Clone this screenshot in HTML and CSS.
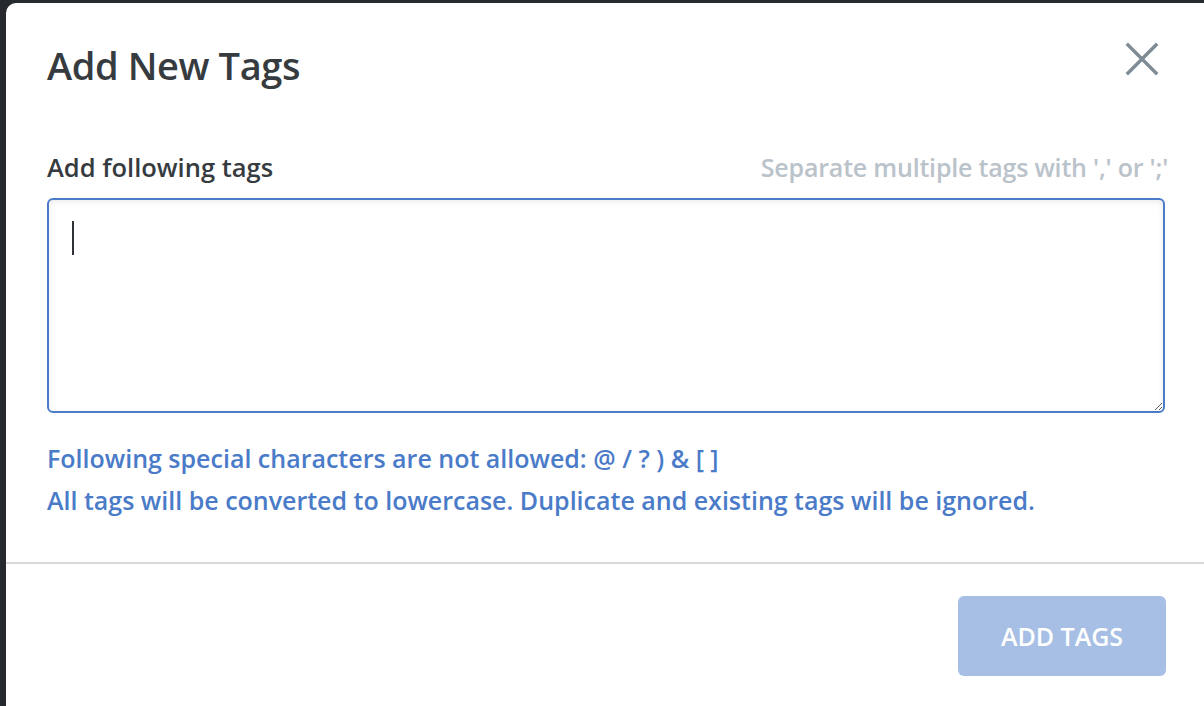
FILE: index.html
```html
<!DOCTYPE html>
<html lang="en">
<head>
  <meta charset="UTF-8">
  <meta name="viewport" content="width=device-width, initial-scale=1.0">
  <title>Add New Tags</title>
  <link rel="stylesheet" href="styles.css">
</head>
<body>
  <div class="modal">
    <div class="modal-header">
      <h1>Add New Tags</h1>
      <button class="close" type="button" aria-label="Close">
        <svg width="34" height="34" viewBox="0 0 34 34">
          <path d="M3 3 L31 31 M31 3 L3 31" stroke="#7f8b94" stroke-width="3.4" stroke-linecap="square" fill="none"/>
        </svg>
      </button>
    </div>
    <div class="modal-body">
      <div class="field-head">
        <label for="tags">Add following tags</label>
        <span class="hint">Separate multiple tags with ',' or ';'</span>
      </div>
      <div class="textarea-wrap">
        <textarea id="tags"></textarea>
        <span class="caret"></span>
      </div>
      <div class="notes">
        <p class="note">Following special characters are not allowed: @ / ? ) &amp; [ ]</p>
        <p class="note">All tags will be converted to lowercase. Duplicate and existing tags will be ignored.</p>
      </div>
    </div>
    <div class="modal-footer">
      <button class="btn-add" type="button" disabled>ADD TAGS</button>
    </div>
  </div>
</body>
</html>
```

FILE: styles.css
```css
body {
  margin: 0;
  background: #26292d;
  font-family: "Open Sans", Arial, sans-serif;
  height: 706px;
  overflow: hidden;
}
.modal {
  margin: 3px 0 0 6px;
  background: #fff;
  border-top-left-radius: 10px;
  height: 720px;
}
.modal-header {
  display: flex;
  justify-content: space-between;
  align-items: flex-start;
  padding: 36px 45px 0 41px;
}
.modal-header h1 {
  margin: 0;
  font-size: 38px;
  line-height: 52px;
  font-weight: 600;
  color: #363b40;
  letter-spacing: -0.4px;
}
.close {
  background: none;
  border: none;
  padding: 0;
  margin-top: 3px;
  width: 34px;
  height: 34px;
  cursor: pointer;
}
.close svg {
  display: block;
}
.modal-body {
  padding: 59px 39px 0 41px;
}
.field-head {
  display: flex;
  justify-content: space-between;
  align-items: baseline;
  margin-bottom: 14px;
  line-height: 34px;
}
.field-head label {
  font-size: 25.5px;
  font-weight: 600;
  color: #363b40;
}
.hint {
  font-size: 25px;
  font-weight: 600;
  color: #bac2ca;
  letter-spacing: -0.2px;
  margin-right: -3px;
}
.textarea-wrap {
  position: relative;
}
textarea {
  display: block;
  box-sizing: border-box;
  width: 100%;
  height: 215px;
  border: 2px solid #4a7cc9;
  border-radius: 6px;
  box-shadow: inset 0 2px 6px rgba(0, 0, 0, 0.08);
  outline: none;
  resize: vertical;
  font-family: inherit;
  font-size: 22px;
}
.caret {
  position: absolute;
  left: 25px;
  top: 23px;
  width: 2px;
  height: 34px;
  background: #2f3337;
}
.notes {
  margin-top: 24px;
}
.note {
  margin: 0;
  font-size: 25px;
  font-weight: 600;
  color: #4a7bc8;
  line-height: 42px;
}
.modal-footer {
  margin-top: 41px;
  border-top: 2px solid #d9d9d9;
  display: flex;
  justify-content: flex-end;
  padding: 32px 38px 0 0;
}
.btn-add {
  width: 208px;
  height: 80px;
  border: none;
  border-radius: 6px;
  background: #a7bfe4;
  color: #fff;
  font-family: inherit;
  font-size: 25px;
  font-weight: 600;
}
```
